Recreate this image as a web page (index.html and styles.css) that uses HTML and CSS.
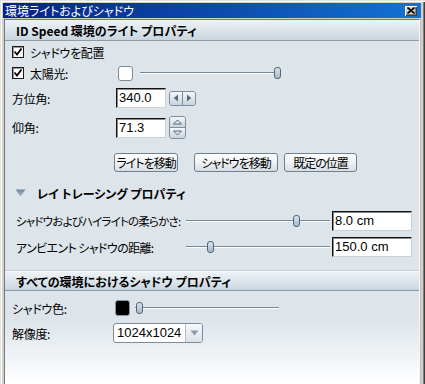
FILE: index.html
```html
<!DOCTYPE html>
<html lang="ja">
<head>
<meta charset="utf-8">
<link rel="stylesheet" href="styles.css">
</head>
<body>
<div class="win">
  <div class="title">
    <span class="ttext">環境ライトおよびシャドウ</span>
    <span class="close"><svg width="8" height="7" viewBox="0 0 8 7"><path d="M0.5 0.5 L7.5 6.5 M7.5 0.5 L0.5 6.5" stroke="#000" stroke-width="1.6"/></svg></span>
  </div>
  <div class="panel">
    <div class="hdr hdr1">ID Speed 環境のライト プロパティ</div>

    <div class="row r1">
      <span class="chk"><svg width="10" height="10" viewBox="0 0 10 10"><path d="M1.5 4.5 L4 7.5 L8.5 1.5" fill="none" stroke="#000" stroke-width="1.8"/></svg></span>
      <span class="ctext">シャドウを配置</span>
    </div>

    <div class="row r2">
      <span class="lab labc">
        <span class="chk"><svg width="10" height="10" viewBox="0 0 10 10"><path d="M1.5 4.5 L4 7.5 L8.5 1.5" fill="none" stroke="#000" stroke-width="1.8"/></svg></span>
        <span class="ctext">太陽光:</span>
      </span>
      <span class="sw sw-white"></span>
      <span class="sl sl-sun"><span class="thumb" style="left:134px"></span></span>
    </div>

    <div class="row r3">
      <span class="lab lab104">方位角:</span>
      <span class="inp inp50">340.0</span>
      <span class="hspin">
        <span class="hs"><svg width="6" height="8" viewBox="0 0 6 8"><path d="M5 0.5 L0.8 4 L5 7.5 Z" fill="#56687a"/></svg></span>
        <span class="hs hs2"><svg width="6" height="8" viewBox="0 0 6 8"><path d="M1 0.5 L5.2 4 L1 7.5 Z" fill="#56687a"/></svg></span>
      </span>
    </div>

    <div class="row r4">
      <span class="lab lab104">仰角:</span>
      <span class="inp inp50">71.3</span>
      <span class="vspin">
        <span class="vs"><svg width="9" height="6" viewBox="0 0 9 6"><path d="M0.5 5 L4.5 1 L8.5 5 Z" fill="#dfe6ec" stroke="#56687a" stroke-width="1"/></svg></span>
        <span class="vs vs2"><svg width="9" height="6" viewBox="0 0 9 6"><path d="M0.5 1 L4.5 5 L8.5 1 Z" fill="#dfe6ec" stroke="#56687a" stroke-width="1"/></svg></span>
      </span>
    </div>

    <div class="row rbtn">
      <span class="btn b1">ライトを移動</span>
      <span class="btn b2">シャドウを移動</span>
      <span class="btn b3">既定の位置</span>
    </div>

    <div class="row hdr2">
      <svg class="tri" width="11" height="8" viewBox="0 0 11 8"><defs><linearGradient id="tg" x1="0" y1="0" x2="0" y2="1"><stop offset="0" stop-color="#6f86a0"/><stop offset="1" stop-color="#aab9c8"/></linearGradient></defs><path d="M0.5 0.5 L10.5 0.5 L5.5 7.5 Z" fill="url(#tg)"/></svg>
      <span class="h2text">レイ トレーシング プロパティ</span>
    </div>

    <div class="row rsoft">
      <span class="lab lab170 tight">シャドウおよびハイライトの柔らかさ:</span>
      <span class="sl sl144"><span class="thumb" style="left:107px"></span></span>
      <span class="inp inp80">8.0 cm</span>
    </div>

    <div class="row ramb">
      <span class="lab lab170">アンビエント シャドウの距離:</span>
      <span class="sl sl144"><span class="thumb" style="left:21px"></span></span>
      <span class="inp inp80">150.0 cm</span>
    </div>

    <div class="hdr hdr3">すべての環境におけるシャドウ プロパティ</div>

    <div class="row rcol">
      <span class="lab lab103">シャドウ色:</span>
      <span class="sw sw-black"></span>
      <span class="sl sl-col"><span class="thumb" style="left:1px"></span></span>
    </div>

    <div class="row rres">
      <span class="lab lab101">解像度:</span>
      <span class="combo">
        <span class="ctxt">1024x1024</span>
        <span class="cbtn"><svg width="9" height="6" viewBox="0 0 9 6"><path d="M0.5 0.5 L8.5 0.5 L4.5 5.5 Z" fill="#8a9bad"/></svg></span>
      </span>
    </div>
  </div>
</div>
</body>
</html>
```
FILE: styles.css
```css
html, body {
  margin: 0;
  padding: 0;
}
body {
  width: 425px;
  height: 384px;
  overflow: hidden;
  background: #d4d0c8;
  font-family: "Noto Sans CJK JP", "Liberation Sans", sans-serif;
  font-size: 12px;
  font-feature-settings: "palt";
  letter-spacing: -0.3px;
  color: #000;
}
.win {
  height: 384px;
  box-sizing: border-box;
  padding: 3px 4px 0 3px;
  display: flex;
  flex-direction: column;
  box-shadow: inset 1px 1px #e4e2dc, inset 2px 2px #ffffff,
              inset -1px 0 #404040, inset -2px 0 #808080;
}
.title {
  height: 15px;
  flex: none;
  display: flex;
  align-items: center;
  background: linear-gradient(90deg, #08218a 0%, #0d4db0 55%, #1274d4 100%);
}
.ttext {
  color: #fff;
  padding-left: 2px;
  line-height: 15px;
  letter-spacing: 0;
}
.close {
  margin-left: auto;
  margin-right: 4px;
  width: 12px;
  height: 10px;
  background: #d4d0c8;
  box-shadow: inset 1px 1px #ffffff, inset -1px -1px #404040, inset -2px -2px #808080;
  display: flex;
  align-items: center;
  justify-content: center;
}
.close svg { display: block; margin-top: -1px; margin-left: -1px; }

.panel {
  flex: 1;
  margin: 1px 1px 0 1px;
  border: 1px solid #6f7b86;
  border-bottom: none;
  border-right-color: #f4f6f8;
  background: linear-gradient(180deg, #dde5eb 0px, #dde5eb 300px, #ffffff 365px);
  box-shadow: 1px 0 #c0c0c0;
}
.hdr {
  box-sizing: border-box;
  height: 21px;
  display: flex;
  align-items: center;
  padding-left: 11px;
  font-weight: bold;
  letter-spacing: 0;
  background: linear-gradient(180deg, #eef2f5 0%, #d9e2e9 60%, #c8d5df 100%);
  border-bottom: 1px solid #8e9aa4;
}
.hdr3 {
  margin-top: 14px;
  height: 20px;
  border-top: 1px solid #f6f8fa;
  box-shadow: 0 -1px #c4ced6;
}
.row {
  display: flex;
  align-items: center;
  height: 20px;
  padding-left: 7px;
}
.r1 { margin-top: 1px; }
.r2 { margin-top: 1px; }
.r3 { margin-top: 5px; }
.r4 { margin-top: 8px; height: 23px; }
.rbtn { margin-top: 14px; height: 19px; padding-left: 109px; }
.hdr2 { margin-top: 11px; padding-left: 10px; }
.rsoft { margin-top: 8px; padding-left: 11px; }
.ramb { margin-top: 6px; padding-left: 11px; }
.rcol { margin-top: 7px; }
.rres { margin-top: 5px; }

.chk {
  box-sizing: border-box;
  width: 12px;
  height: 12px;
  background: #fff;
  border: 1px solid #1a1a1a;
  box-shadow: inset 1px 1px #9a9a9a;
  display: flex;
  align-items: center;
  justify-content: center;
  flex: none;
}
.chk svg { display: block; }
.ctext { margin-left: 6px; }
.lab { flex: none; display: flex; align-items: center; white-space: nowrap; overflow: visible; }
.labc { width: 106px; }
.lab104 { width: 104px; }
.lab170 { width: 170px; letter-spacing: -0.6px; }
.tight { font-size: 11.5px; letter-spacing: -0.8px; }
.lab103 { width: 103px; }
.lab101 { width: 101px; }

.sw {
  box-sizing: border-box;
  flex: none;
  border-radius: 3px;
}
.sw-white {
  width: 15px;
  height: 15px;
  background: #fff;
  border: 1px solid #7d8a97;
}
.sw-black {
  width: 15px;
  height: 16px;
  background: #000;
  border: 1px solid #8a949e;
}
.sl {
  position: relative;
  height: 12px;
  flex: none;
}
.sl::before {
  content: "";
  position: absolute;
  left: 0;
  right: 0;
  top: 5px;
  height: 1px;
  background: #71879a;
  box-shadow: 0 1px #ffffff;
}
.sl-sun { width: 141px; margin-left: 7px; }
.sl144 { width: 144px; }
.sl-col { width: 144px; margin-left: 5px; }
.thumb {
  position: absolute;
  top: 0;
  width: 5px;
  height: 10px;
  border: 1px solid #4f6578;
  border-radius: 3px;
  background: linear-gradient(180deg, #d8e2eb, #a7b9ca);
}

.inp {
  box-sizing: border-box;
  height: 20px;
  flex: none;
  background: #fff;
  border-top: 1px solid #111;
  border-left: 1px solid #111;
  border-right: 1px solid #c9d0d6;
  border-bottom: 1px solid #c9d0d6;
  box-shadow: inset 1px 1px #8a8a8a;
  font-family: "Liberation Sans", sans-serif;
  font-size: 13px;
  letter-spacing: 0;
  line-height: 18px;
  padding-left: 2px;
}
.inp50 { width: 50px; }
.inp80 { width: 80px; margin-left: 2px; }

.hspin {
  display: flex;
  margin-left: 3px;
  height: 15px;
  box-sizing: border-box;
  border: 1px solid #7d8d9b;
  border-radius: 3px;
  overflow: hidden;
}
.hs {
  width: 12px;
  display: flex;
  align-items: center;
  justify-content: center;
  background: linear-gradient(180deg, #f5f8fa, #c8d3dc);
}
.hs2 { border-left: 1px solid #7d8d9b; }
.hs svg, .vs svg, .cbtn svg { display: block; }
.vspin {
  display: flex;
  flex-direction: column;
  margin-left: 3px;
  width: 17px;
  height: 23px;
  box-sizing: border-box;
  border: 1px solid #7d8d9b;
  border-radius: 3px;
  overflow: hidden;
}
.vs {
  flex: 1;
  display: flex;
  align-items: center;
  justify-content: center;
  background: linear-gradient(180deg, #f5f8fa, #c8d3dc);
}
.vs2 { border-top: 1px solid #7d8d9b; }

.btn {
  box-sizing: border-box;
  height: 19px;
  flex: none;
  display: flex;
  align-items: center;
  justify-content: center;
  border: 1px solid #6f7f8c;
  border-radius: 3px;
  background: linear-gradient(180deg, #ffffff 0%, #eef2f5 50%, #d6dee5 100%);
  white-space: nowrap;
  letter-spacing: -1px;
}
.b1 { width: 64px; }
.b2 { width: 84px; margin-left: 16px; }
.b3 { width: 73px; margin-left: 6px; }

.tri { display: block; flex: none; }
.h2text { margin-left: 11px; font-weight: bold; letter-spacing: 0; }

.combo {
  box-sizing: border-box;
  width: 90px;
  height: 20px;
  display: flex;
  border: 1px solid #7b8b99;
  border-radius: 3px;
  background: #fff;
  overflow: hidden;
}
.ctxt {
  flex: 1;
  font-family: "Liberation Sans", sans-serif;
  font-size: 13px;
  letter-spacing: 0;
  line-height: 18px;
  padding-left: 3px;
}
.cbtn {
  width: 16px;
  border-left: 1px solid #b3bfc9;
  display: flex;
  align-items: center;
  justify-content: center;
  background: linear-gradient(180deg, #f7f9fb, #dbe2e8);
}
```
